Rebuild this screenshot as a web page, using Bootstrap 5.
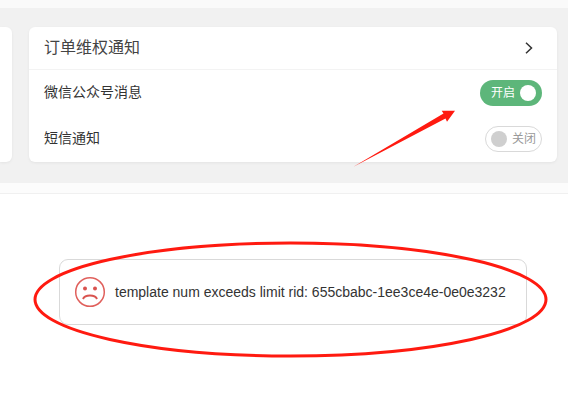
<!DOCTYPE html>
<html lang="zh">
<head>
<meta charset="utf-8">
<title>通知设置</title>
<link href="https://cdn.jsdelivr.net/npm/bootstrap@5.3.0/dist/css/bootstrap.min.css" rel="stylesheet">
<style>
html,body{margin:0;background:#fff;overflow:hidden}
.shot{position:relative;width:568px;height:404px;overflow:hidden;font-family:"Liberation Sans","Noto Sans CJK SC",sans-serif;color:#333}
.topstrip{height:8px;background:#fafafa}
.band{height:175px;background:#f1f1f1;padding:19px 11px 21px 0;gap:17px}
.stub{width:12px;background:#fff;border-radius:0 6px 6px 0;box-shadow:0 1px 3px rgba(0,0,0,.06)}
.pane{background:#fff;border-radius:6px;box-shadow:0 1px 3px rgba(0,0,0,.06);flex:1;min-width:0;border:0}
.panehead{height:43px;padding:0 24px 0 15px;border-bottom:1px solid #f3f3f3;font-size:16px;color:#444}
.panerow{height:46px;padding:0 15px;font-size:14px;color:#333}
.rowlabel{padding-bottom:2px}
.tog{height:26px;border-radius:13px;font-size:12px}
.tog-on{width:62px;background:#5db67a;color:#fff;padding:0 6px 0 11px}
.tog-off{width:57px;background:#fff;border:1px solid #d9d9d9;color:#999;padding:0 5px 0 5px}
.knob{width:16px;height:16px;border-radius:50%;background:#fff;flex:none}
.tog-off .knob{background:#cfcfcf}
.divide{height:10px;background:#fcfcfc;border-bottom:1px solid #f0f0f0;box-sizing:content-box}
.notice{margin:65px 41px 0 59px;height:66px;border:1px solid #d9d9d9;border-radius:9px;padding:0 14px;gap:9px;font-size:14px;color:#333;white-space:nowrap}
.ink{position:absolute;left:0;top:0;pointer-events:none}
</style>
</head>
<body>
<div class="shot">
  <div class="topstrip"></div>
  <div class="band d-flex">
    <div class="stub"></div>
    <div class="pane card">
      <div class="panehead d-flex align-items-center justify-content-between">
        <span>订单维权通知</span>
        <svg width="8" height="12" viewBox="0 0 8 12"><path d="M1 .8 6.500 6 1 11.200" fill="none" stroke="#333" stroke-width="1.500"/></svg>
      </div>
      <div>
        <div class="panerow d-flex align-items-center justify-content-between">
          <span class="rowlabel">微信公众号消息</span>
          <div class="tog tog-on d-flex align-items-center justify-content-between"><span>开启</span><span class="knob"></span></div>
        </div>
        <div class="panerow d-flex align-items-center justify-content-between">
          <span class="rowlabel">短信通知</span>
          <div class="tog tog-off d-flex align-items-center justify-content-between"><span class="knob"></span><span>关闭</span></div>
        </div>
      </div>
    </div>
  </div>
  <div class="divide"></div>
  <div class="notice d-flex align-items-center">
    <svg width="32" height="32" viewBox="0 0 32 32" class="flex-shrink-0">
      <circle cx="16" cy="16" r="14.300" fill="none" stroke="#e0605c" stroke-width="1.500"/>
      <circle cx="11" cy="12.500" r="2" fill="#d9534f"/>
      <circle cx="21" cy="12.500" r="2" fill="#d9534f"/>
      <path d="M9 23c2-4.600 12-4.600 14 0" fill="none" stroke="#d9534f" stroke-width="2"/>
    </svg>
    <span>template num exceeds limit rid: 655cbabc-1ee3ce4e-0e0e3232</span>
  </div>
  <svg class="ink" width="568" height="404" viewBox="0 0 568 404">
    <polygon points="353,167 443.500,113.500 441.700,110.700 455,110.700 447,121.700 445.500,118.500" fill="#ff1a10"/>
    <ellipse cx="290.500" cy="299.500" rx="255.500" ry="56.500" fill="none" stroke="#ff1a10" stroke-width="3"/>
  </svg>
</div>
<script src="https://cdn.jsdelivr.net/npm/bootstrap@5.3.0/dist/js/bootstrap.bundle.min.js"></script>
</body>
</html>
